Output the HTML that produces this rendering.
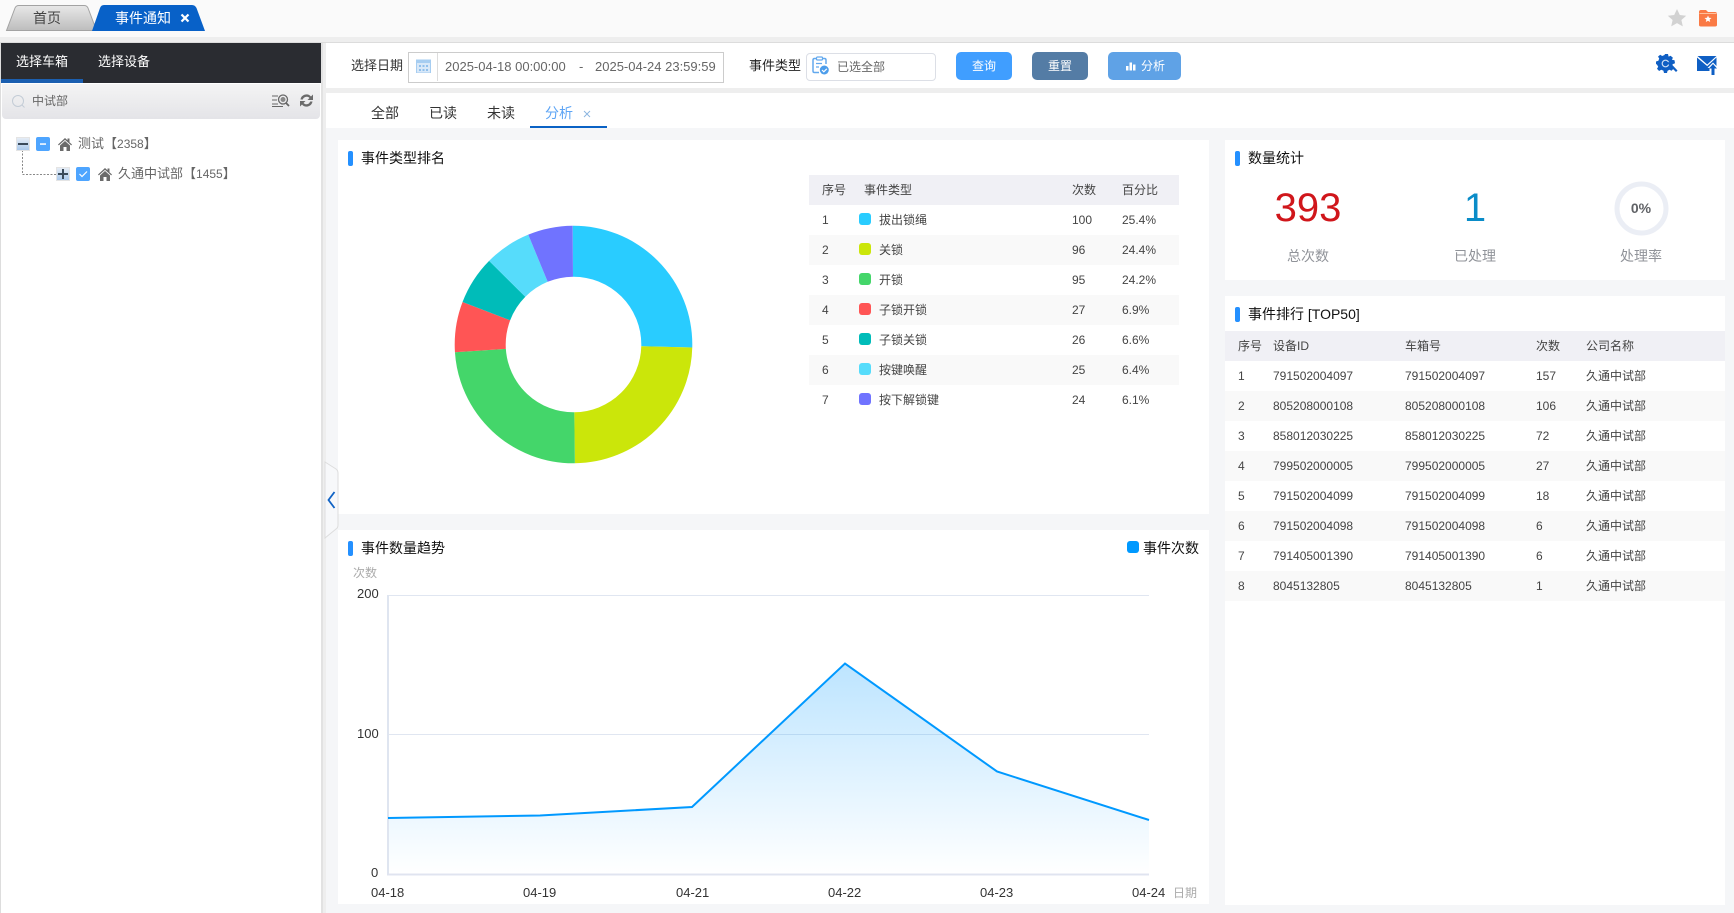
<!DOCTYPE html>
<html lang="zh-CN"><head><meta charset="utf-8"><title>事件通知</title>
<style>
*{box-sizing:border-box}
html,body{margin:0;padding:0}
body{width:1734px;height:913px;position:relative;overflow:hidden;background:#f5f6f8;font-family:"Liberation Sans","Noto Sans CJK SC",sans-serif;font-size:12px;color:#444}
.a{position:absolute;white-space:nowrap}
.box{position:absolute}
.t14{font-size:14px;line-height:20px}
.t13{font-size:13px;line-height:20px}
.t12{font-size:12px;line-height:18px}
.card{position:absolute;background:#fff}
.tt{position:absolute;font-size:14px;line-height:20px;color:#111;white-space:nowrap}
.bar{position:absolute;width:5px;height:15px;background:#2490ff;border-radius:2px}
.hd,.row{position:absolute;height:30px;line-height:30px;font-size:12px;color:#444}
.hd{background:#f0f0f5}
.row.e{background:#f9f9f9}
.hd span,.row span{position:absolute;top:0;white-space:nowrap}
.l span:nth-child(1){left:13px}.l span:nth-child(2){left:55px}.l span:nth-child(3){left:263px}.l span:nth-child(4){left:313px}
.row.l span:nth-child(2){left:50px;width:12px;height:12px;top:8px;border-radius:3px}
.row.l span:nth-child(3){left:70px}.row.l span:nth-child(4){left:263px}.row.l span:nth-child(5){left:313px}
.r span:nth-child(1){left:13px}.r span:nth-child(2){left:48px}.r span:nth-child(3){left:180px}.r span:nth-child(4){left:311px}.r span:nth-child(5){left:361px}
.btn{position:absolute;top:52px;height:28px;border-radius:5px;color:#fff;font-size:12px;line-height:29px;text-align:center}
.lab{position:absolute;font-size:13px;line-height:16px;color:#333;white-space:nowrap}
.n{font-size:12px}
</style></head><body>

<!-- top tab bar -->
<div class="box" style="left:0;top:0;width:1734px;height:37px;background:#fafafa"></div>
<div class="box" style="left:0;top:37px;width:1734px;height:5px;background:#eeeeee"></div>
<div class="box" style="left:0;top:42px;width:1734px;height:1px;background:#dcdcdc"></div>
<svg class="box" style="left:0;top:0" width="220" height="36" viewBox="0 0 220 36">
<defs><linearGradient id="gt" x1="0" y1="0" x2="0" y2="1"><stop offset="0" stop-color="#e8e8e8"/><stop offset="1" stop-color="#bdbdbd"/></linearGradient></defs>
<path d="M6.500 30.500 L15 8 Q16 5.500 19 5.500 L84 5.500 Q87 5.500 88 8 L96.500 30.500 Z" fill="url(#gt)" stroke="#a3a3a3"/>
<path d="M92 31 L100 8 Q101 5 104 5 L192 5 Q195 5 196.500 8 L205 31 Z" fill="#0861c8"/>
</svg>
<div class="a t14" style="left:33px;top:8px;color:#444">首页</div>
<div class="a t14" style="left:115px;top:8px;color:#fff">事件通知</div>
<svg class="box" style="left:180px;top:13px" width="10" height="10" viewBox="0 0 10 10"><path d="M1.500 1.500L8.500 8.500M8.500 1.500L1.500 8.500" stroke="#fff" stroke-width="2.200"/></svg>

<svg class="box" style="left:1667px;top:8px" width="20" height="20" viewBox="0 0 20 20"><path d="M10 1l2.800 6 6.400.7-4.800 4.300 1.400 6.400L10 15.100l-5.800 3.300 1.400-6.400L.8 7.700 7.200 7z" fill="#d2d2d2"/></svg>
<svg class="box" style="left:1698px;top:8px" width="20" height="20" viewBox="0 0 20 20"><path d="M1 4q0-2 2-2h5l2 2h7q2 0 2 2v11q0 1.500-2 1.500H3q-2 0-2-1.500z" fill="#fa7a45"/><path d="M1.500 5.500h17" stroke="#ffc09c" stroke-width="1"/><path d="M10 7.500l1 2.300 2.500.2-1.900 1.600.6 2.400L10 12.700 7.800 14l.6-2.400L6.500 10l2.500-.2z" fill="#fff"/></svg>

<!-- left panel -->
<div class="box" style="left:0;top:43px;width:323px;height:870px;background:#fff;border-left:1px solid #ddd;border-right:2px solid #e2e2e2"></div>
<div class="box" style="left:1px;top:43px;width:320px;height:40px;background:#2a2c31"></div>
<div class="box" style="left:1px;top:79px;width:82px;height:4px;background:#1b5fb0"></div>
<div class="a t13" style="left:16px;top:52px;color:#fff">选择车箱</div>
<div class="a t13" style="left:98px;top:52px;color:#fff">选择设备</div>
<div class="box" style="left:2px;top:84px;width:318px;height:35px;background:linear-gradient(#f4f4f4,#e4e4e8);border-radius:0 0 4px 4px"></div>
<svg class="box" style="left:11px;top:94px" width="15" height="15" viewBox="0 0 15 15"><circle cx="7" cy="7" r="5.500" fill="none" stroke="#c3ccd6" stroke-width="1"/><path d="M11 11l2.500 2.500" stroke="#c3ccd6"/></svg>
<div class="a t12" style="left:32px;top:92px;color:#666">中试部</div>
<svg class="box" style="left:272px;top:93px" width="18" height="15" viewBox="0 0 18 15"><path d="M0 3h6M0 7h5M0 11h6M0 13.500h11" stroke="#666" fill="none"/><circle cx="11" cy="6.500" r="4.500" fill="none" stroke="#666" stroke-width="1.300"/><circle cx="11" cy="6.500" r="2.500" fill="#888"/><path d="M14 10l3 3" stroke="#666" stroke-width="1.800"/></svg>
<svg class="box" style="left:299px;top:93px" width="15" height="15" viewBox="0 0 15 15"><path d="M1.500 6.500A6 6 0 0 1 12 3.500L14 1.500V7H8.500l2-2A4 4 0 0 0 3.800 6.500zM13.500 8.500A6 6 0 0 1 3 11.500L1 13.500V8h5.500l-2 2A4 4 0 0 0 11.200 8.500z" fill="#6b6b6b"/></svg>

<!-- tree -->
<svg class="box" style="left:0;top:130px" width="125" height="55" viewBox="0 0 125 55">
<defs><linearGradient id="eb" x1="0" y1="0" x2="0" y2="1"><stop offset="0" stop-color="#e8eef6"/><stop offset="1" stop-color="#a8c8ec"/></linearGradient>
<path id="hm" d="M0 7.500L7 1l2.500 2.300V1.500h2v3.700L14 7.500l-.8.9L7 2.900.8 8.400zM2 8.500L7 4l5 4.500V14H8.500v-4h-3v4H2z" fill="#6b6b6b"/></defs>
<path d="M22.500 20V44.500H57" fill="none" stroke="#888" stroke-dasharray="2 1.500"/>
<rect x="16.500" y="7.500" width="13" height="13" fill="url(#eb)" stroke="#e4e4e4"/><rect x="18" y="13" width="10" height="2" fill="#3a4a5a"/>
<rect x="36" y="7" width="14" height="14" rx="2" fill="#4ea5ff"/><rect x="40" y="13.300" width="6" height="1.500" fill="#fff"/>
<use href="#hm" x="58" y="7"/>
<rect x="56.500" y="37.500" width="13" height="13" fill="url(#eb)" stroke="#e4e4e4"/><path d="M58 43h10v2H58zM62 39h2v10h-2z" fill="#3a4a5a"/>
<rect x="76" y="37" width="14" height="14" rx="2" fill="#4ea5ff"/><path d="M79.500 44l2.500 2.500 5-5" fill="none" stroke="#fff" stroke-width="1.200"/>
<use href="#hm" x="98" y="37"/>
</svg>
<div class="a" style="left:78px;top:135px;font-size:13px;line-height:18px;color:#666">测试【<span class="n">2358</span>】</div>
<div class="a" style="left:118px;top:165px;font-size:13px;line-height:18px;color:#666">久通中试部【<span class="n">1455</span>】</div>

<!-- toolbar -->
<div class="box" style="left:326px;top:43px;width:1408px;height:45px;background:#fff"></div>
<div class="box" style="left:326px;top:88px;width:1408px;height:5px;background:#eeeeee"></div>
<div class="box" style="left:323px;top:43px;width:3px;height:870px;background:#eeeeee"></div>
<div class="a t13" style="left:351px;top:56px;color:#333">选择日期</div>
<div class="box" style="left:408px;top:52px;width:316px;height:31px;border:1px solid #cccccc"></div>
<div class="box" style="left:437px;top:53px;width:1px;height:28px;background:#ddd"></div>
<svg class="box" style="left:416px;top:59px" width="15" height="14" viewBox="0 0 15 14"><rect x=".5" y="1" width="14" height="13" fill="#d8e8f8" stroke="#a6cdf1"/><rect x="0" y="1" width="15" height="3" fill="#a6cdf1"/><path d="M3 6h2v2H3zM6.500 6h2v2h-2zM10 6h2v2h-2zM3 10h2v2H3zM6.500 10h2v2h-2zM10 10h2v2h-2z" fill="#8fbfec"/></svg>
<div class="a" style="left:445px;top:58px;font-size:13px;line-height:18px;color:#666">2025-04-18 00:00:00</div>
<div class="a" style="left:579px;top:58px;font-size:13px;line-height:18px;color:#666">-</div>
<div class="a" style="left:595px;top:58px;font-size:13px;line-height:18px;color:#666">2025-04-24 23:59:59</div>
<div class="a t13" style="left:749px;top:56px;color:#222">事件类型</div>
<div class="box" style="left:806px;top:53px;width:130px;height:28px;border:1px solid #dcdfe6;border-radius:4px"></div>
<svg class="box" style="left:812px;top:56px" width="17" height="19" viewBox="0 0 17 19"><path d="M5 2.500H2.500Q1 2.500 1 4v11q0 1.500 1.500 1.500H7M10 2.500h2.500Q14 2.500 14 4v4" fill="none" stroke="#63a9ee" stroke-width="1.500"/><rect x="4.500" y="1" width="6" height="3" rx="1" fill="none" stroke="#63a9ee" stroke-width="1.200"/><path d="M4 7.500h6M4 11h3" stroke="#63a9ee" stroke-width="1.300"/><circle cx="12.300" cy="14" r="4.500" fill="#4c9deb"/><path d="M10 14l1.800 1.800 3-3" fill="none" stroke="#fff" stroke-width="1.200"/></svg>
<div class="a t12" style="left:837px;top:58px;color:#666">已选全部</div>
<div class="btn" style="left:956px;width:56px;background:#409eff">查询</div>
<div class="btn" style="left:1032px;width:56px;background:#547ca5">重置</div>
<div class="btn" style="left:1108px;width:73px;background:#5fa2e6;text-align:left;padding-left:33px">分析</div>
<svg class="box" style="left:1125px;top:61px" width="11" height="10" viewBox="0 0 11 10"><path d="M1 5h2.500v4.500H1zM4.500 1.500H7v8H4.500zM8 3.500h2.500v6H8z" fill="#fff"/></svg>

<svg class="box" style="left:1656px;top:54px" width="22" height="21" viewBox="0 0 22 21"><path d="M9 0h3l.6 2.600 2-.8 2.300 1.900-1 2 2.600.5.5 3-2.400 1-.5 2.500 1.500 1.800-2 2.300-2.200-1.100-1.900 1.200L11 19H8l-.6-2.400-2.200-.9-2.100 1.300L1 14.800l1.200-2.100L1 10.600 0 10V7.500l2.400-.8.800-2.200L2 2.600 4.200.8l2 1.200L8.500 1z" fill="#0f5fc4"/><circle cx="9.500" cy="9.500" r="3.300" fill="none" stroke="#cfe0f5" stroke-width="1.200"/><path d="M9.500 7.500l3 3 7.500 7.500 1.500-1.500-7.500-8" fill="#0f5fc4"/></svg>
<svg class="box" style="left:1697px;top:55px" width="21" height="20" viewBox="0 0 21 20"><path d="M.5 1h19L10.200 9.500z" fill="#0f5fc4"/><path d="M0 2.500V16h12.500v-3h-2l5.500-5.500 3.500 3.500V2.500l-9.300 8.600z" fill="#0f5fc4"/><path d="M16 9l4 4.500h-2.500V20h-3v-6.500H12z" fill="#0f5fc4"/></svg>

<!-- tabs -->
<div class="box" style="left:326px;top:93px;width:1408px;height:35px;background:#fff"></div>
<div class="a t14" style="left:371px;top:103px;color:#333">全部</div>
<div class="a t14" style="left:429px;top:103px;color:#333">已读</div>
<div class="a t14" style="left:487px;top:103px;color:#333">未读</div>
<div class="a t14" style="left:545px;top:103px;color:#5ea5f5">分析</div>
<svg class="box" style="left:583px;top:110px" width="8" height="8" viewBox="0 0 8 8"><path d="M1 1l6 6M7 1L1 7" stroke="#8db6e0" stroke-width="1"/></svg>
<div class="box" style="left:530px;top:126px;width:77px;height:2px;background:#0a62c5"></div>

<!-- card 1: ranking -->
<div class="card" style="left:338px;top:140px;width:871px;height:374px"></div>
<div class="bar" style="left:348px;top:151px"></div>
<div class="tt" style="left:361px;top:148px">事件类型排名</div>
<svg class="box" style="left:445px;top:216px" width="257" height="257" viewBox="0 0 257 257">
<g fill="none" stroke-width="51" transform="rotate(-90 128.500 128.500)">
<circle cx="128.500" cy="128.500" r="93.300" pathLength="393" stroke="#29ccff" stroke-dasharray="100 293"/>
<circle cx="128.500" cy="128.500" r="93.300" pathLength="393" stroke="#cbe60a" stroke-dasharray="96 297" stroke-dashoffset="-100"/>
<circle cx="128.500" cy="128.500" r="93.300" pathLength="393" stroke="#44d66a" stroke-dasharray="95 298" stroke-dashoffset="-196"/>
<circle cx="128.500" cy="128.500" r="93.300" pathLength="393" stroke="#ff5555" stroke-dasharray="27 366" stroke-dashoffset="-291"/>
<circle cx="128.500" cy="128.500" r="93.300" pathLength="393" stroke="#00bcb9" stroke-dasharray="26 367" stroke-dashoffset="-318"/>
<circle cx="128.500" cy="128.500" r="93.300" pathLength="393" stroke="#56dcfb" stroke-dasharray="25 368" stroke-dashoffset="-344"/>
<circle cx="128.500" cy="128.500" r="93.300" pathLength="393" stroke="#7073ff" stroke-dasharray="24 369" stroke-dashoffset="-369"/>
</g></svg>

<div class="hd l" style="left:809px;top:175px;width:370px"><span>序号</span><span>事件类型</span><span>次数</span><span>百分比</span></div>
<div class="row l" style="left:809px;top:205px;width:370px"><span>1</span><span style="background:#29ccff"></span><span>拔出锁绳</span><span>100</span><span>25.4%</span></div>
<div class="row l e" style="left:809px;top:235px;width:370px"><span>2</span><span style="background:#cbe60a"></span><span>关锁</span><span>96</span><span>24.4%</span></div>
<div class="row l" style="left:809px;top:265px;width:370px"><span>3</span><span style="background:#44d66a"></span><span>开锁</span><span>95</span><span>24.2%</span></div>
<div class="row l e" style="left:809px;top:295px;width:370px"><span>4</span><span style="background:#ff5555"></span><span>子锁开锁</span><span>27</span><span>6.9%</span></div>
<div class="row l" style="left:809px;top:325px;width:370px"><span>5</span><span style="background:#00bcb9"></span><span>子锁关锁</span><span>26</span><span>6.6%</span></div>
<div class="row l e" style="left:809px;top:355px;width:370px"><span>6</span><span style="background:#56dcfb"></span><span>按键唤醒</span><span>25</span><span>6.4%</span></div>
<div class="row l" style="left:809px;top:385px;width:370px"><span>7</span><span style="background:#7073ff"></span><span>按下解锁键</span><span>24</span><span>6.1%</span></div>

<!-- card 2: trend -->
<div class="card" style="left:338px;top:530px;width:871px;height:374px"></div>
<div class="bar" style="left:348px;top:541px"></div>
<div class="tt" style="left:361px;top:538px">事件数量趋势</div>
<div class="box" style="left:1127px;top:541px;width:12px;height:12px;background:#0099ff;border-radius:3px"></div>
<div class="tt" style="left:1143px;top:538px">事件次数</div>
<svg class="box" style="left:338px;top:530px" width="871" height="374" viewBox="338 530 871 374">
<defs><linearGradient id="ar" gradientUnits="userSpaceOnUse" x1="0" y1="664" x2="0" y2="874"><stop offset="0" stop-color="#0099ff" stop-opacity=".26"/><stop offset="1" stop-color="#0099ff" stop-opacity="0"/></linearGradient></defs>
<path d="M388 595.500H1149M388 734.500H1149" stroke="#e0e6f1" fill="none"/>
<path d="M388 818L540 815.500 692 807 845 663.500 997 771.500 1149 820V874H388Z" fill="url(#ar)"/>
<path d="M388 595V875" stroke="#dfe5f0" stroke-width="2" fill="none"/>
<path d="M387 874.500H1149" stroke="#e0e4f0" stroke-width="2" fill="none"/>
<path d="M388 818L540 815.500 692 807 845 663.500 997 771.500 1149 820" fill="none" stroke="#0099ff" stroke-width="2"/>
</svg>
<div class="a t12" style="left:353px;top:564px;color:#aaa">次数</div>
<div class="lab" style="left:357px;top:586px">200</div>
<div class="lab" style="left:357px;top:726px">100</div>
<div class="lab" style="left:371px;top:865px">0</div>
<div class="lab" style="left:371px;top:885px">04-18</div>
<div class="lab" style="left:523px;top:885px">04-19</div>
<div class="lab" style="left:676px;top:885px">04-21</div>
<div class="lab" style="left:828px;top:885px">04-22</div>
<div class="lab" style="left:980px;top:885px">04-23</div>
<div class="lab" style="left:1132px;top:885px">04-24</div>
<div class="a t12" style="left:1173px;top:884px;color:#aaa">日期</div>

<!-- card 3: stats -->
<div class="card" style="left:1225px;top:140px;width:500px;height:140px"></div>
<div class="bar" style="left:1235px;top:151px"></div>
<div class="tt" style="left:1248px;top:148px">数量统计</div>
<div class="a" style="left:1258px;width:100px;text-align:center;top:185px;font-size:40px;line-height:46px;color:#d0161b">393</div>
<div class="a" style="left:1425px;width:100px;text-align:center;top:185px;font-size:40px;line-height:46px;color:#0a8cc8">1</div>
<svg class="box" style="left:1613px;top:180px" width="57" height="57" viewBox="0 0 57 57"><circle cx="28.500" cy="28.500" r="24.500" fill="none" stroke="#ebeef5" stroke-width="5"/></svg>
<div class="a" style="left:1611px;width:60px;text-align:center;top:199px;font-size:14px;line-height:18px;font-weight:bold;color:#606266">0%</div>
<div class="a t14" style="left:1258px;width:100px;text-align:center;top:246px;color:#909399">总次数</div>
<div class="a t14" style="left:1425px;width:100px;text-align:center;top:246px;color:#909399">已处理</div>
<div class="a t14" style="left:1591px;width:100px;text-align:center;top:246px;color:#909399">处理率</div>

<!-- card 4: top50 -->
<div class="card" style="left:1225px;top:296px;width:500px;height:609px"></div>
<div class="bar" style="left:1235px;top:307px"></div>
<div class="tt" style="left:1248px;top:304px">事件排行 [TOP50]</div>
<div class="hd r" style="left:1225px;top:331px;width:500px"><span>序号</span><span>设备ID</span><span>车箱号</span><span>次数</span><span>公司名称</span></div>
<div class="row r" style="left:1225px;top:361px;width:500px"><span>1</span><span>791502004097</span><span>791502004097</span><span>157</span><span>久通中试部</span></div>
<div class="row r e" style="left:1225px;top:391px;width:500px"><span>2</span><span>805208000108</span><span>805208000108</span><span>106</span><span>久通中试部</span></div>
<div class="row r" style="left:1225px;top:421px;width:500px"><span>3</span><span>858012030225</span><span>858012030225</span><span>72</span><span>久通中试部</span></div>
<div class="row r e" style="left:1225px;top:451px;width:500px"><span>4</span><span>799502000005</span><span>799502000005</span><span>27</span><span>久通中试部</span></div>
<div class="row r" style="left:1225px;top:481px;width:500px"><span>5</span><span>791502004099</span><span>791502004099</span><span>18</span><span>久通中试部</span></div>
<div class="row r e" style="left:1225px;top:511px;width:500px"><span>6</span><span>791502004098</span><span>791502004098</span><span>6</span><span>久通中试部</span></div>
<div class="row r" style="left:1225px;top:541px;width:500px"><span>7</span><span>791405001390</span><span>791405001390</span><span>6</span><span>久通中试部</span></div>
<div class="row r e" style="left:1225px;top:571px;width:500px"><span>8</span><span>8045132805</span><span>8045132805</span><span>1</span><span>久通中试部</span></div>

<!-- collapse handle -->
<svg class="box" style="left:324px;top:461px" width="16" height="78" viewBox="0 0 16 78"><path d="M1 1L12 8Q14 9.500 14 12V64Q14 67 12 68L1 77Z" fill="#f7f8fa" stroke="#dddddd"/><path d="M10.500 31L4.500 39l6 8" fill="none" stroke="#0f62c4" stroke-width="1.800"/></svg>

</body></html>
